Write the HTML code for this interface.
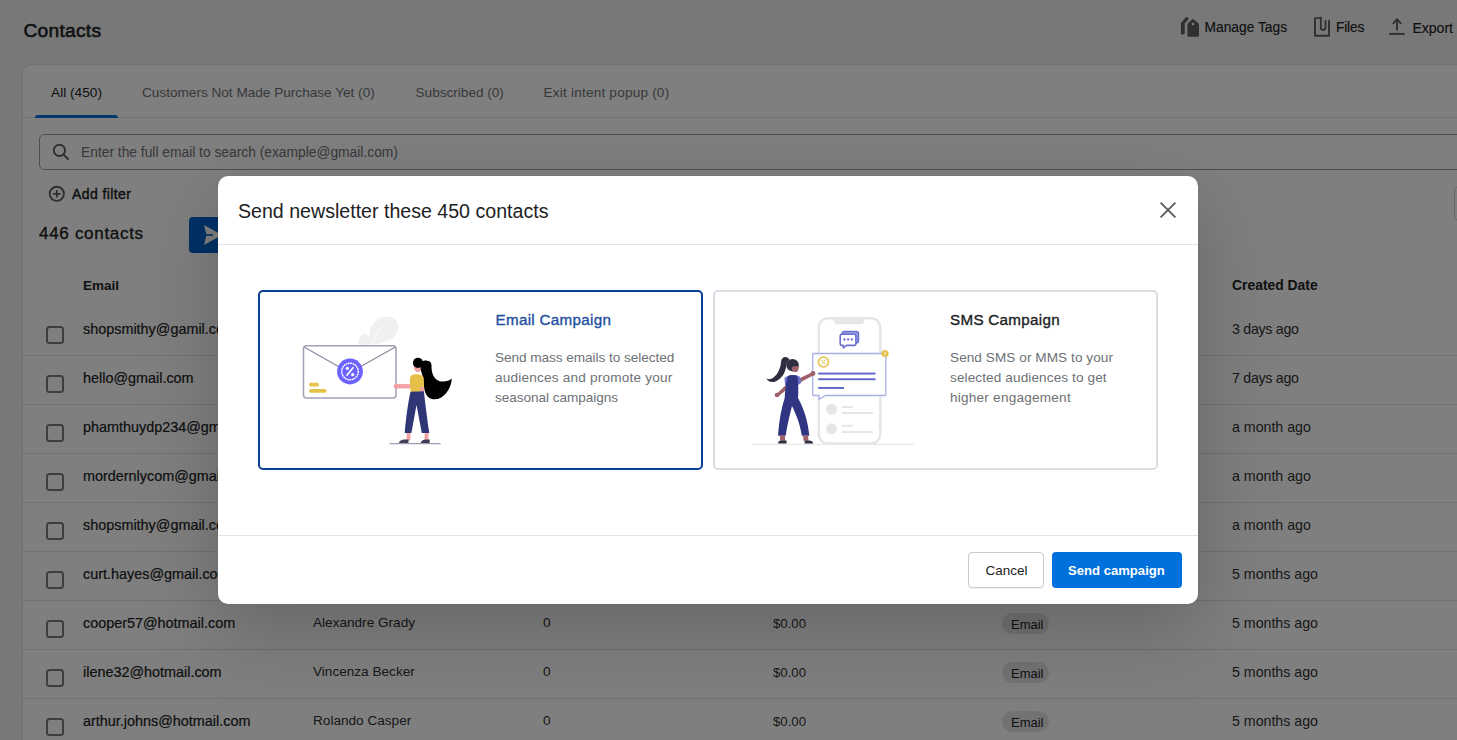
<!DOCTYPE html>
<html><head><meta charset="utf-8"><title>Contacts</title>
<style>
*{margin:0;padding:0;box-sizing:border-box}
html,body{width:1457px;height:740px;overflow:hidden}
body{background:#f1f1f1;font-family:"Liberation Sans",sans-serif;position:relative}
.t{position:absolute;white-space:nowrap;line-height:1}
.t{line-height:1em}
.box{position:absolute}
.ic{position:absolute;overflow:visible}
#page{position:absolute;left:0;top:0;width:1457px;height:740px;overflow:hidden}
#ov{position:absolute;left:0;top:0;width:1457px;height:740px;background:rgba(0,0,0,0.5)}
#modal{position:absolute;left:0;top:0;width:1457px;height:740px}
</style></head><body>
<div id="page">
<div class="t" style="left:23.5px;top:20.95px;font-size:19.2px;color:#202223;letter-spacing:0.25px;-webkit-text-stroke:0.55px #202223;">Contacts</div>
<div class="t" style="left:1204.5px;top:21.32px;font-size:13.8px;color:#202223;-webkit-text-stroke:0.15px #202223;">Manage Tags</div>
<div class="t" style="left:1336px;top:21.32px;font-size:13.8px;color:#202223;letter-spacing:-0.2px;-webkit-text-stroke:0.15px #202223;">Files</div>
<div class="t" style="left:1412.5px;top:21.15px;font-size:14px;color:#202223;-webkit-text-stroke:0.15px #202223;">Export</div>
<svg class="ic" style="left:1180px;top:16px" width="21" height="22" viewBox="0 0 21 22">
<path d="M0.9 7.2 L5.6 1.6 Q6.5 0.7 7.5 1.3 L8.9 2.4 L4.7 7.6 L4.7 17.3 Q4.7 18.5 3.5 18.5 L2.1 18.5 Q0.9 18.5 0.9 17.3 Z" fill="#5c5f62"/>
<path d="M7.4 8.6 Q7.4 7.9 8 7.3 L12 3.4 Q12.9 2.6 13.8 3.4 L18.4 7.3 Q19 7.9 19 8.6 L19 19.6 Q19 20.8 17.8 20.8 L8.6 20.8 Q7.4 20.8 7.4 19.6 Z" fill="#5c5f62"/>
<circle cx="12.9" cy="8" r="1.35" fill="#ffffff"/>
</svg>
<svg class="ic" style="left:1313px;top:16px" width="18" height="22" viewBox="0 0 18 22">
<path d="M6.4 2.1 L2 2.1 L2 19.7 L16 19.7 L16 4.8" fill="none" stroke="#5c5f62" stroke-width="1.9" stroke-linejoin="round" stroke-linecap="round"/>
<path d="M7.8 1.3 L7.8 11.6 Q7.8 14 10.15 14 Q12.5 14 12.5 11.6 L12.5 4.8" fill="none" stroke="#5c5f62" stroke-width="1.8" stroke-linecap="round"/>
</svg>
<svg class="ic" style="left:1388px;top:17px" width="18" height="19" viewBox="0 0 18 19">
<path d="M9 13.5 L9 2.5" stroke="#5c5f62" stroke-width="1.9" fill="none"/>
<path d="M4.9 6.8 L9 2.2 L13.1 6.8" stroke="#5c5f62" stroke-width="1.9" fill="none" stroke-linejoin="round"/>
<path d="M1.2 16.9 L16.7 16.9" stroke="#5c5f62" stroke-width="1.9"/>
</svg>
<div class="box" style="left:23px;top:65px;width:1460px;height:720px;background:#fff;border-radius:8px;box-shadow:0 0 0 1px rgba(0,0,0,0.05), 0 1px 1px rgba(0,0,0,0.06)"></div>
<div class="t" style="left:51px;top:86.40px;font-size:13.7px;color:#202223;">All (450)</div>
<div class="t" style="left:142px;top:86.49px;font-size:13.6px;color:#6d7175;">Customers Not Made Purchase Yet (0)</div>
<div class="t" style="left:415.5px;top:86.49px;font-size:13.6px;color:#6d7175;">Subscribed (0)</div>
<div class="t" style="left:543.5px;top:86.49px;font-size:13.6px;color:#6d7175;letter-spacing:0.2px;">Exit intent popup (0)</div>
<div class="box" style="left:23px;top:117px;width:1440px;height:1px;background:#e1e3e5"></div>
<div class="box" style="left:35px;top:115px;width:83px;height:3px;background:#0070dc;border-radius:3px 3px 0 0"></div>
<div class="box" style="left:39px;top:134px;width:1440px;height:36px;border:1px solid #999ea3;border-radius:5px;background:#fff"></div>
<svg class="ic" style="left:51px;top:142px" width="20" height="20" viewBox="0 0 20 20">
<circle cx="8.4" cy="8.4" r="5.6" fill="none" stroke="#5c5f62" stroke-width="1.9"/>
<path d="M12.4 12.4 L17 17" stroke="#5c5f62" stroke-width="2" stroke-linecap="round"/>
</svg>
<div class="t" style="left:81px;top:146.32px;font-size:13.8px;color:#6d7175;">Enter the full email to search (example@gmail.com)</div>
<svg class="ic" style="left:48px;top:185px" width="18" height="18" viewBox="0 0 18 18">
<circle cx="8.8" cy="8.8" r="7.1" fill="none" stroke="#5c5f62" stroke-width="1.9"/>
<path d="M8.8 5 L8.8 12.6 M5 8.8 L12.6 8.8" stroke="#5c5f62" stroke-width="1.8"/>
</svg>
<div class="t" style="left:72px;top:187.15px;font-size:14px;color:#202223;letter-spacing:0.4px;-webkit-text-stroke:0.4px #202223;">Add filter</div>
<div class="t" style="left:39px;top:224.61px;font-size:17px;color:#202223;letter-spacing:0.7px;-webkit-text-stroke:0.35px #202223;">446 contacts</div>
<div class="box" style="left:189px;top:217px;width:120px;height:36px;background:#0062cc;border-radius:4px"></div>
<svg class="ic" style="left:200px;top:222px" width="24" height="26" viewBox="0 0 24 26">
<path d="M4 3 L22 13 L4 23 L6.5 13 Z" fill="#fff"/>
<path d="M6 13 L13 13" stroke="#0062cc" stroke-width="1.6"/>
</svg>
<div class="box" style="left:1454px;top:185.5px;width:40px;height:35.5px;border:1px solid #c4c8cc;border-radius:5px;background:#fff"></div>
<div class="t" style="left:83px;top:278.57px;font-size:13.5px;color:#202223;font-weight:bold;">Email</div>
<div class="t" style="left:1232px;top:279.23px;font-size:13.9px;color:#202223;font-weight:bold;">Created Date</div>
<div class="box" style="left:46.3px;top:326.2px;width:17.5px;height:17.5px;border:2px solid #797d82;border-radius:3.5px"></div>
<div class="t" style="left:83px;top:321.81px;font-size:14.4px;color:#202223;-webkit-text-stroke:0.2px #202223;">shopsmithy@gamil.com</div>
<div class="t" style="left:1232px;top:321.98px;font-size:14.2px;color:#303030;letter-spacing:-0.28px;">3 days ago</div>
<div class="box" style="left:23px;top:355px;width:1440px;height:1px;background:#e1e3e5"></div>
<div class="box" style="left:46.3px;top:375.2px;width:17.5px;height:17.5px;border:2px solid #797d82;border-radius:3.5px"></div>
<div class="t" style="left:83px;top:370.81px;font-size:14.4px;color:#202223;-webkit-text-stroke:0.2px #202223;">hello@gmail.com</div>
<div class="t" style="left:1232px;top:370.98px;font-size:14.2px;color:#303030;letter-spacing:-0.28px;">7 days ago</div>
<div class="box" style="left:23px;top:404px;width:1440px;height:1px;background:#e1e3e5"></div>
<div class="box" style="left:46.3px;top:424.2px;width:17.5px;height:17.5px;border:2px solid #797d82;border-radius:3.5px"></div>
<div class="t" style="left:83px;top:419.81px;font-size:14.4px;color:#202223;-webkit-text-stroke:0.2px #202223;">phamthuydp234@gmail.com</div>
<div class="t" style="left:1232px;top:419.98px;font-size:14.2px;color:#303030;letter-spacing:0px;">a month ago</div>
<div class="box" style="left:23px;top:453px;width:1440px;height:1px;background:#e1e3e5"></div>
<div class="box" style="left:46.3px;top:473.2px;width:17.5px;height:17.5px;border:2px solid #797d82;border-radius:3.5px"></div>
<div class="t" style="left:83px;top:468.81px;font-size:14.4px;color:#202223;-webkit-text-stroke:0.2px #202223;">mordernlycom@gmail.com</div>
<div class="t" style="left:1232px;top:468.98px;font-size:14.2px;color:#303030;letter-spacing:0px;">a month ago</div>
<div class="box" style="left:23px;top:502px;width:1440px;height:1px;background:#e1e3e5"></div>
<div class="box" style="left:46.3px;top:522.2px;width:17.5px;height:17.5px;border:2px solid #797d82;border-radius:3.5px"></div>
<div class="t" style="left:83px;top:517.81px;font-size:14.4px;color:#202223;-webkit-text-stroke:0.2px #202223;">shopsmithy@gmail.com</div>
<div class="t" style="left:1232px;top:517.98px;font-size:14.2px;color:#303030;letter-spacing:0px;">a month ago</div>
<div class="box" style="left:23px;top:551px;width:1440px;height:1px;background:#e1e3e5"></div>
<div class="box" style="left:46.3px;top:571.2px;width:17.5px;height:17.5px;border:2px solid #797d82;border-radius:3.5px"></div>
<div class="t" style="left:83px;top:566.81px;font-size:14.4px;color:#202223;-webkit-text-stroke:0.2px #202223;">curt.hayes@gmail.com</div>
<div class="t" style="left:1232px;top:566.98px;font-size:14.2px;color:#303030;letter-spacing:0px;">5 months ago</div>
<div class="box" style="left:23px;top:600px;width:1440px;height:1px;background:#e1e3e5"></div>
<div class="box" style="left:46.3px;top:620.2px;width:17.5px;height:17.5px;border:2px solid #797d82;border-radius:3.5px"></div>
<div class="t" style="left:83px;top:615.81px;font-size:14.4px;color:#202223;-webkit-text-stroke:0.2px #202223;">cooper57@hotmail.com</div>
<div class="t" style="left:313px;top:616.49px;font-size:13.6px;color:#303030;">Alexandre Grady</div>
<div class="t" style="left:543px;top:616.49px;font-size:13.6px;color:#303030;">0</div>
<div class="t" style="left:773px;top:616.83px;font-size:13.2px;color:#303030;">$0.00</div>
<div class="box" style="left:1002px;top:613px;width:47px;height:21px;background:#e4e5e7;border-radius:11px"></div>
<div class="t" style="left:1011px;top:618.00px;font-size:13px;color:#202223;">Email</div>
<div class="t" style="left:1232px;top:615.98px;font-size:14.2px;color:#303030;letter-spacing:0px;">5 months ago</div>
<div class="box" style="left:23px;top:649px;width:1440px;height:1px;background:#e1e3e5"></div>
<div class="box" style="left:46.3px;top:669.2px;width:17.5px;height:17.5px;border:2px solid #797d82;border-radius:3.5px"></div>
<div class="t" style="left:83px;top:664.81px;font-size:14.4px;color:#202223;-webkit-text-stroke:0.2px #202223;">ilene32@hotmail.com</div>
<div class="t" style="left:313px;top:665.49px;font-size:13.6px;color:#303030;">Vincenza Becker</div>
<div class="t" style="left:543px;top:665.49px;font-size:13.6px;color:#303030;">0</div>
<div class="t" style="left:773px;top:665.83px;font-size:13.2px;color:#303030;">$0.00</div>
<div class="box" style="left:1002px;top:662px;width:47px;height:21px;background:#e4e5e7;border-radius:11px"></div>
<div class="t" style="left:1011px;top:667.00px;font-size:13px;color:#202223;">Email</div>
<div class="t" style="left:1232px;top:664.98px;font-size:14.2px;color:#303030;letter-spacing:0px;">5 months ago</div>
<div class="box" style="left:23px;top:698px;width:1440px;height:1px;background:#e1e3e5"></div>
<div class="box" style="left:46.3px;top:718.2px;width:17.5px;height:17.5px;border:2px solid #797d82;border-radius:3.5px"></div>
<div class="t" style="left:83px;top:713.81px;font-size:14.4px;color:#202223;-webkit-text-stroke:0.2px #202223;">arthur.johns@hotmail.com</div>
<div class="t" style="left:313px;top:714.49px;font-size:13.6px;color:#303030;">Rolando Casper</div>
<div class="t" style="left:543px;top:714.49px;font-size:13.6px;color:#303030;">0</div>
<div class="t" style="left:773px;top:714.83px;font-size:13.2px;color:#303030;">$0.00</div>
<div class="box" style="left:1002px;top:711px;width:47px;height:21px;background:#e4e5e7;border-radius:11px"></div>
<div class="t" style="left:1011px;top:716.00px;font-size:13px;color:#202223;">Email</div>
<div class="t" style="left:1232px;top:713.98px;font-size:14.2px;color:#303030;letter-spacing:0px;">5 months ago</div>
</div>
<div id="ov"></div>
<div id="modal">
<div class="box" style="left:218px;top:176px;width:980px;height:428px;background:#fff;border-radius:10px;box-shadow:0 26px 80px rgba(0,0,0,0.2), 0 0 1px rgba(0,0,0,0.2)"></div>
<div class="t" style="left:238px;top:202.41px;font-size:19.6px;color:#202223;">Send newsletter these 450 contacts</div>
<svg class="ic" style="left:1158px;top:200px" width="20" height="20" viewBox="0 0 20 20">
<path d="M2.6 2.6 L17.4 17.4 M17.4 2.6 L2.6 17.4" stroke="#5c5f62" stroke-width="1.9" stroke-linecap="butt"/>
</svg>
<div class="box" style="left:218px;top:244px;width:980px;height:1px;background:#e1e3e5"></div>
<div class="box" style="left:218px;top:535px;width:980px;height:1px;background:#e1e3e5"></div>
<div class="box" style="left:258px;top:290px;width:445px;height:180px;border:2px solid #0b3f94;border-radius:5px"></div>
<div class="box" style="left:713px;top:290px;width:445px;height:180px;border:2px solid #dcdce4;border-radius:5px"></div>
<div class="t" style="left:495.5px;top:312.13px;font-size:15.2px;color:#1c4f9e;letter-spacing:0.3px;-webkit-text-stroke:0.35px #1c4f9e;">Email Campaign</div>
<div class="t" style="left:495px;top:351.49px;font-size:13.6px;color:#6d7175;letter-spacing:-0.05px;">Send mass emails to selected</div>
<div class="t" style="left:495px;top:371.49px;font-size:13.6px;color:#6d7175;letter-spacing:0.2px;">audiences and promote your</div>
<div class="t" style="left:495px;top:391.49px;font-size:13.6px;color:#6d7175;letter-spacing:-0.05px;">seasonal campaigns</div>
<div class="t" style="left:950px;top:312.13px;font-size:15.2px;color:#202223;letter-spacing:0.3px;-webkit-text-stroke:0.35px #202223;">SMS Campaign</div>
<div class="t" style="left:950px;top:351.49px;font-size:13.6px;color:#6d7175;letter-spacing:0.06px;">Send SMS or MMS to your</div>
<div class="t" style="left:950px;top:371.49px;font-size:13.6px;color:#6d7175;letter-spacing:0.1px;">selected audiences to get</div>
<div class="t" style="left:950px;top:391.49px;font-size:13.6px;color:#6d7175;letter-spacing:0.22px;">higher engagement</div>
<div class="box" style="left:968px;top:552px;width:76px;height:36px;border:1px solid #c9cccf;border-radius:4px;background:#fff;box-shadow:0 1px 0 rgba(0,0,0,0.05)"></div>
<div class="t" style="left:985.5px;top:563.57px;font-size:13.5px;color:#202223;">Cancel</div>
<div class="box" style="left:1052px;top:552px;width:130px;height:36px;background:#0070dc;border-radius:4px"></div>
<div class="t" style="left:1068px;top:563.91px;font-size:13.1px;color:#ffffff;font-weight:bold;">Send campaign</div>
<svg class="ic" style="left:295px;top:310px" width="165" height="140" viewBox="0 0 165 140">
<path d="M75.8 34.5 C72.5 24 75 12 86.5 7.5 C96 4 104 9.5 103.2 18.5 C102.2 27.5 92 33.5 75.8 34.5 Z" fill="#f0f0f0"/>
<path d="M63.6 34.6 C62.8 28.5 66 24 69.8 24 C73.5 24 75.5 28 76 34.6 Z" fill="#f0f0f0"/>
<path d="M76.5 34.5 Q82 20 95.5 8.6" fill="none" stroke="#fff" stroke-width="0.8"/>
<rect x="8.5" y="35.8" width="92.5" height="52.2" rx="3" fill="#fff" stroke="#a3a0b5" stroke-width="1.5"/>
<path d="M9.5 37.2 L46 58 M100 37.2 L63 58" stroke="#8e8aa0" stroke-width="1.3"/>
<circle cx="55" cy="61.5" r="12.9" fill="#6c63ff"/>
<circle cx="55" cy="61.5" r="8.3" fill="none" stroke="#fff" stroke-width="1.4" stroke-dasharray="1.8 0.5"/>
<path d="M51.5 65.8 L58.5 57.2" stroke="#fff" stroke-width="1.6"/>
<circle cx="52.4" cy="58.3" r="1.6" fill="#fff"/>
<circle cx="57.7" cy="64.7" r="1.6" fill="#fff"/>
<rect x="14" y="72.8" width="10" height="3.8" rx="1.9" fill="#e6c14a"/>
<rect x="14" y="79" width="17.5" height="3.8" rx="1.9" fill="#e6c14a"/>
<path d="M126 61 C124 57 125 50.5 130 50.5 C134.5 50 137 53.5 136.5 58 C137 64 139 69 144 71 C149 72.5 154 71 156.8 68.5 C156.3 76 152.5 84 145.5 88 C138 91.5 131 88 129.5 80 C128.5 73 128 66 126 61 Z" fill="#000"/>
<circle cx="132.2" cy="55.2" r="4.1" fill="#000"/>
<path d="M118.5 54.5 C118.3 59 120.5 62.2 123 62.3 C125 62.3 126 60 125.6 57 L125 53.5 Z" fill="#f3a3a6"/>
<circle cx="123" cy="52.8" r="5.1" fill="#000"/>
<path d="M98.7 76.2 C98.7 74.6 99.8 73.8 101.2 73.8 L115 74.2 C117.5 74.5 118 78 115.5 78.6 L101.2 78.6 C99.6 78.4 98.7 77.6 98.7 76.2 Z" fill="#f3a3a6"/>
<path d="M115 68 C115.5 65 118 64.2 121.5 64.3 C125.5 64.5 128.5 65.5 128.8 68.5 L128.8 81.5 L115.8 82.2 C115 77 114.8 72 115 68 Z" fill="#e6c14a"/>
<path d="M124.8 77.5 L128.6 76.8 L129.2 86 L126.3 85.2 Z" fill="#f3a3a6"/>
<path d="M115.5 81.8 L128.8 81.2 C130.2 92 132 108 134.3 123 L126.8 123 L121.5 95 L116.4 123 L109.7 123 C111 108 113 93 115.5 81.8 Z" fill="#2f3676"/>
<path d="M111.6 123 L115.4 123 L115.4 130.4 L111.6 130.4Z M129.6 123 L133.4 123 L133.4 130.4 L129.6 130.4Z" fill="#f3a3a6"/>
<path d="M104 133.4 C104 130.8 107 129.6 110 129.6 L113.5 129.6 L113.5 133.4Z M125.8 133.4 C125.8 130.8 128.5 129.6 131 129.6 L134.7 129.6 L134.7 133.4Z" fill="#3f3d56"/>
<path d="M94.6 133.6 L145.7 133.6" stroke="#a09fb0" stroke-width="1.1"/>
</svg>
<svg class="ic" style="left:745px;top:310px" width="175" height="140" viewBox="0 0 175 140">
<path d="M7.6 134.3 L168.4 134.3" stroke="#e6e6e6" stroke-width="1.2"/>
<rect x="73.8" y="8.2" width="61.5" height="125.2" rx="9" fill="#fff" stroke="#e6e6e6" stroke-width="2.5"/>
<path d="M89 8.5 L119 8.5 L119 11 Q119 14.2 115.5 14.2 L92.5 14.2 Q89 14.2 89 11Z" fill="#e6e6e6"/>
<rect x="97.3" y="21.6" width="16.2" height="11.4" rx="2.2" fill="#9da3e2" stroke="#6a70cc" stroke-width="1.5"/>
<path d="M95.2 25.8 Q95.2 24.3 96.8 24.3 L109.3 24.3 Q110.9 24.3 110.9 25.8 L110.9 33.7 Q110.9 35.4 109.3 35.4 L101.5 35.4 L98.3 37.8 L98.3 35.4 L96.8 35.4 Q95.2 35.4 95.2 33.7 Z" fill="#fff" stroke="#6a70cc" stroke-width="1.6" stroke-linejoin="round"/>
<circle cx="99.4" cy="29.5" r="1.15" fill="#6a70cc"/><circle cx="103.1" cy="29.5" r="1.15" fill="#6a70cc"/><circle cx="106.8" cy="29.5" r="1.15" fill="#6a70cc"/>
<circle cx="86.6" cy="99.3" r="5.5" fill="#e6e6e6"/>
<rect x="96.5" y="96" width="11.5" height="2" rx="1" fill="#e6e6e6"/>
<rect x="96.5" y="102" width="31.8" height="2" rx="1" fill="#e6e6e6"/>
<circle cx="86.6" cy="118.8" r="5.5" fill="#e6e6e6"/>
<rect x="96.5" y="114.8" width="11.5" height="2" rx="1" fill="#e6e6e6"/>
<rect x="96.5" y="121" width="31.8" height="2" rx="1" fill="#e6e6e6"/>
<path d="M68.5 43.5 Q67.7 43.5 67.7 44.5 L67.7 84.5 Q67.7 85.5 68.5 85.5 L74 85.5 L74 89.3 L80.5 85.5 L139.8 85.5 Q140.8 85.5 140.8 84.5 L140.8 44.5 Q140.8 43.5 139.8 43.5Z" fill="#fff" stroke="#aab0e6" stroke-width="1.3"/>
<circle cx="78.5" cy="52" r="5" fill="#fff" stroke="#e6c14a" stroke-width="1.6"/>
<path d="M76.8 54.3 L80.2 49.7" stroke="#e6c14a" stroke-width="1"/>
<circle cx="77" cy="50.5" r="0.8" fill="#e6c14a"/><circle cx="80" cy="53.5" r="0.8" fill="#e6c14a"/>
<circle cx="140" cy="43.5" r="3.6" fill="#e6c14a"/>
<path d="M140 41.6 L140 44.3" stroke="#fff" stroke-width="0.9"/><circle cx="140" cy="45.6" r="0.5" fill="#fff"/>
<rect x="73.2" y="62.6" width="57.3" height="1.9" fill="#5c63c9"/>
<rect x="73.2" y="68.3" width="57.3" height="1.9" fill="#5c63c9"/>
<rect x="73.2" y="77" width="25.8" height="1.9" fill="#5c63c9"/>
<path d="M42.5 47.5 C39.5 46 36.5 47.5 36 52 C35.5 58 33 64 28.5 67.5 C26 69.5 23.5 69.5 21.5 68.5 C22.5 71.5 26.5 73 30.5 71.5 C37 69 40.5 62 41.5 55 C42 52 43.5 50 45 50 Z" fill="#2f2e41"/>
<circle cx="47.6" cy="55.2" r="6.2" fill="#2f2e41"/>
<path d="M46.5 58 C47 61.5 49.5 62.5 51.5 62 C53.5 61 54 58.5 53.5 56 L48 56.5 Z" fill="#a0616a"/>
<path d="M53 69 L66.5 62.5 L68.5 65.3 L55 72.5 Z" fill="#a0616a"/>
<circle cx="68" cy="63.5" r="2.4" fill="#a0616a"/>
<path d="M42 74 L32 83.5 L34 86 L44.5 77 Z" fill="#a0616a"/>
<circle cx="32" cy="85" r="2.3" fill="#a0616a"/>
<path d="M39.5 68 C42 65.5 48 64.5 52.5 65.5 C55.5 66.5 56.5 69.5 56 73 L53 75 L40 75 Z" fill="#6a70cc"/>
<path d="M43 66 C46.5 64.5 50.5 64.8 52.5 67 C53.5 74 53.5 82 53 88 C58 97 63 110 64.3 125.8 L56.8 125.8 C55 113 50 102 47 96 C44.5 106 42 116 40.7 125.8 L33.1 125.8 C34 111 36.5 98 39.7 88 C40 80 41 72 43 66 Z" fill="#2f3582"/>
<path d="M35 125.5 L40 125.5 L40 130.8 L35 130.8Z M58 125.5 L63 125.5 L63.5 130.8 L58.5 130.8Z" fill="#a0616a"/>
<path d="M33.1 133.4 C33.1 131 35 130.4 37 130.4 L41.6 130.4 L41.6 133.4Z M59.6 133.4 L59.6 130.4 L64 130.4 C66.5 130.4 68.1 131.5 68.1 133.4Z" fill="#2f2e41"/>
</svg>
</div>
</body></html>
